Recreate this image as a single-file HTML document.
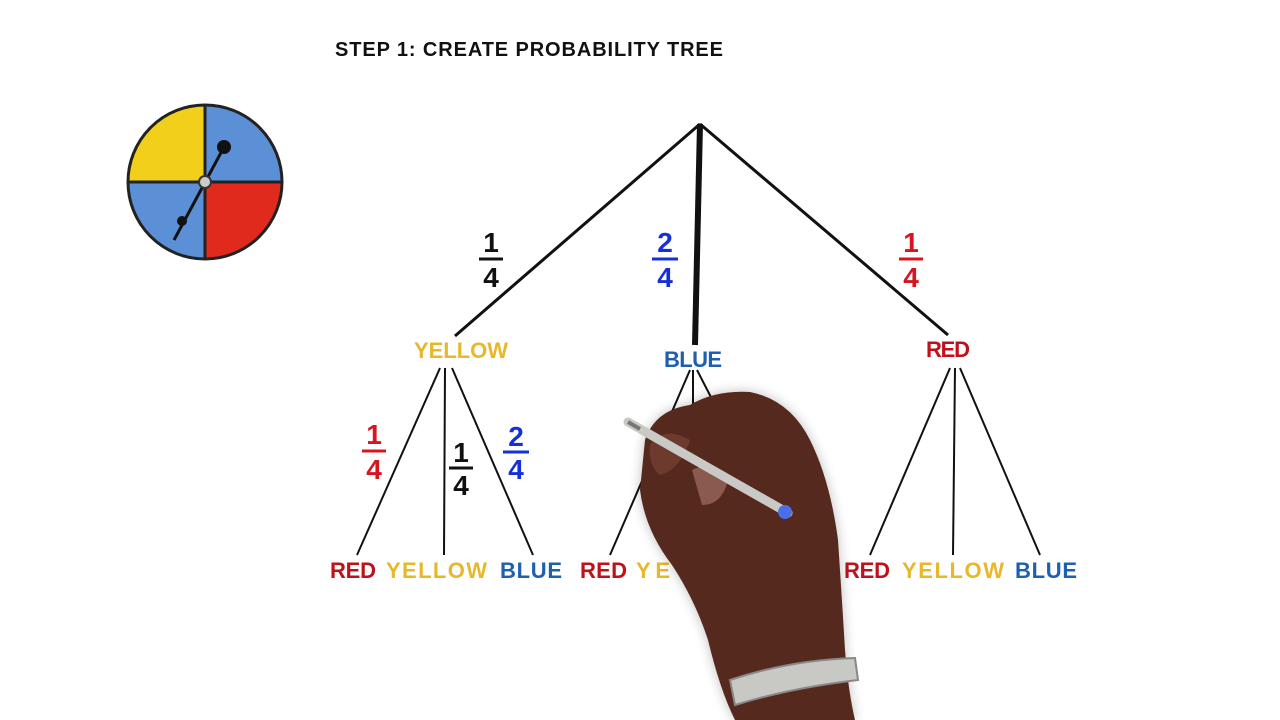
<!DOCTYPE html>
<html><head><meta charset="utf-8"><style>
html,body{margin:0;padding:0;background:#fff;width:1280px;height:720px;overflow:hidden}
svg{display:block}
text{font-family:"Liberation Sans",sans-serif;font-weight:bold}
</style></head><body>
<svg width="1280" height="720" viewBox="0 0 1280 720">
<rect width="1280" height="720" fill="#fff"/>
<text x="335" y="56" font-size="20" fill="#111" textLength="388">STEP 1:  CREATE PROBABILITY TREE</text>
<g>
<circle cx="205" cy="182" r="77" fill="#5b8fd6"/>
<path d="M205 182 L205 105 A77 77 0 0 0 128 182 Z" fill="#f2cf1a"/>
<path d="M205 182 L282 182 A77 77 0 0 1 205 259 Z" fill="#e02a1e"/>
<circle cx="205" cy="182" r="77" fill="none" stroke="#222" stroke-width="3"/>
<line x1="205" y1="105" x2="205" y2="259" stroke="#222" stroke-width="3"/>
<line x1="128" y1="182" x2="282" y2="182" stroke="#222" stroke-width="3"/>
<line x1="224" y1="147" x2="174" y2="240" stroke="#111" stroke-width="3"/>
<circle cx="224" cy="147" r="7" fill="#111"/>
<circle cx="182" cy="221" r="5" fill="#111"/>
<circle cx="205" cy="182" r="6" fill="#ccc" stroke="#333" stroke-width="2"/>
</g>
<g stroke="#111" stroke-width="3" fill="none">
<line x1="700" y1="124" x2="455" y2="336"/>
<line x1="700" y1="124" x2="695" y2="345" stroke-width="6"/>
<line x1="700" y1="124" x2="948" y2="335"/>
<g stroke-width="2">
<line x1="440" y1="368" x2="357" y2="555"/>
<line x1="445" y1="368" x2="444" y2="555"/>
<line x1="452" y1="368" x2="533" y2="555"/>
<line x1="690" y1="370" x2="610" y2="555"/>
<line x1="693" y1="370" x2="693" y2="410"/>
<line x1="697" y1="370" x2="715" y2="405"/>
<line x1="950" y1="368" x2="870" y2="555"/>
<line x1="955" y1="368" x2="953" y2="555"/>
<line x1="960" y1="368" x2="1040" y2="555"/>
</g>
</g>
<g font-size="28" text-anchor="middle">
<text x="491" y="252" fill="#111">1</text><line x1="479" y1="259" x2="503" y2="259" stroke="#111" stroke-width="3"/><text x="491" y="287" fill="#111">4</text>
<text x="665" y="252" fill="#1530d8">2</text><line x1="652" y1="259" x2="678" y2="259" stroke="#1530d8" stroke-width="3"/><text x="665" y="287" fill="#1530d8">4</text>
<text x="911" y="252" fill="#d8141e">1</text><line x1="899" y1="259" x2="923" y2="259" stroke="#d8141e" stroke-width="3"/><text x="911" y="287" fill="#d8141e">4</text>
<text x="374" y="444" fill="#d8141e">1</text><line x1="362" y1="451" x2="386" y2="451" stroke="#d8141e" stroke-width="3"/><text x="374" y="479" fill="#d8141e">4</text>
<text x="461" y="462" fill="#111">1</text><line x1="449" y1="468" x2="473" y2="468" stroke="#111" stroke-width="3"/><text x="461" y="495" fill="#111">4</text>
<text x="516" y="446" fill="#1530d8">2</text><line x1="503" y1="452" x2="529" y2="452" stroke="#1530d8" stroke-width="3"/><text x="516" y="479" fill="#1530d8">4</text>
</g>
<g font-size="22">
<text x="414" y="358" fill="#e6b82a" textLength="94">YELLOW</text>
<text x="664" y="367" fill="#1f5fb0" textLength="58">BLUE</text>
<text x="926" y="357" fill="#c0101c" textLength="44">RED</text>
<text x="330" y="578" fill="#c0101c" textLength="46">RED</text>
<text x="386" y="578" fill="#e6b82a" textLength="101">YELLOW</text>
<text x="500" y="578" fill="#1f5fb0" textLength="62">BLUE</text>
<text x="580" y="578" fill="#c0101c" textLength="47">RED</text>
<text x="636" y="578" fill="#e6b82a" textLength="34">YE</text>
<text x="844" y="578" fill="#c0101c" textLength="46">RED</text>
<text x="902" y="578" fill="#e6b82a" textLength="102">YELLOW</text>
<text x="1015" y="578" fill="#1f5fb0" textLength="62">BLUE</text>
</g>
<defs><filter id="sh"><feGaussianBlur stdDeviation="6"/></filter></defs>
<path d="M645 440 Q655 410 690 405 Q715 390 750 392 Q790 400 810 440 Q830 480 838 540 Q842 600 845 650 Q848 690 855 720 L735 720 Q720 690 708 640 Q695 600 672 565 Q645 530 640 490 Z" fill="#000" opacity="0.25" filter="url(#sh)"/>
<path d="M645 440 Q655 410 690 405 Q715 390 750 392 Q790 400 810 440 Q830 480 838 540 Q842 600 845 650 Q848 690 855 720 L735 720 Q720 690 708 640 Q695 600 672 565 Q645 530 640 490 Z" fill="#56291f"/>
<path d="M650 445 Q665 425 690 440 Q680 470 660 475 Q648 465 650 445 Z" fill="#6e3a2e"/>
<path d="M692 470 Q712 460 728 480 Q722 505 702 505 Z" fill="#8a5a50"/>
<line x1="628" y1="422" x2="788" y2="513" stroke="#c9c9c6" stroke-width="9" stroke-linecap="round"/>
<line x1="628" y1="422" x2="640" y2="429" stroke="#777" stroke-width="4"/>
<circle cx="785" cy="512" r="7" fill="#4a6fe8"/>
<path d="M730 680 Q790 660 855 658 L858 680 Q790 688 735 705 Z" fill="#c8c8c4" stroke="#888" stroke-width="2"/>
</svg>
</body></html>
